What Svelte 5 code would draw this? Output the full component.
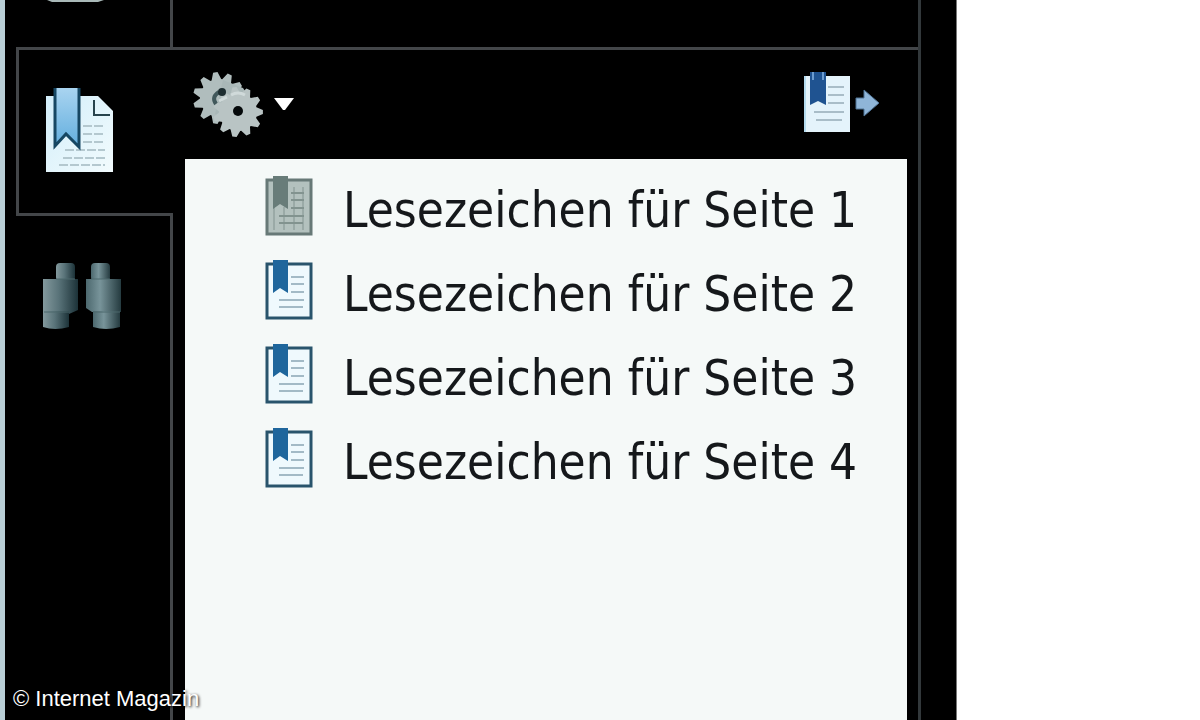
<script lang="ts">
  type Bookmark = { id: number; title: string };

  const bookmarks: Bookmark[] = [1, 2, 3, 4].map((id) => ({
    id,
    title: `Lesezeichen für Seite ${id}`
  }));

  let selected = $state(1);

  function gear(cx: number, cy: number, outer: number, inner: number, teeth: number) {
    const points: string[] = [];
    const step = (Math.PI * 2) / teeth;
    for (let i = 0; i < teeth; i++) {
      const corners = [
        [inner, -0.45],
        [outer, -0.15],
        [outer, 0.15],
        [inner, 0.45]
      ];
      for (const [r, offset] of corners) {
        const a = (i + offset) * step;
        points.push(`${(cx + r * Math.cos(a)).toFixed(1)},${(cy + r * Math.sin(a)).toFixed(1)}`);
      }
    }
    return points.join(' ');
  }
</script>

<div class="page">
  <div class="reader">
    <nav class="sidebar" aria-label="Navigation">
      <div class="slot slot-top">
        <button class="tab" aria-label="Seiten">
          <svg width="60" height="4" viewBox="0 0 60 4">
            <path d="M1 0H58L52 2H6z" fill="#a9b9b8" />
          </svg>
        </button>
      </div>
      <button class="tab tab-active" aria-label="Lesezeichen">
        <svg width="70" height="88" viewBox="0 0 70 88">
          <defs>
            <linearGradient id="ribbon" x1="0" y1="0" x2="0" y2="1">
              <stop offset="0" stop-color="#a9d4f0" />
              <stop offset="1" stop-color="#62aede" />
            </linearGradient>
            <linearGradient id="sheet" x1="0" y1="0" x2="1" y2="1">
              <stop offset="0" stop-color="#d3eefa" />
              <stop offset="1" stop-color="#f2fbfd" />
            </linearGradient>
          </defs>
          <path d="M1 8H53L68 23V84H1z" fill="url(#sheet)" />
          <path d="M49 12V27H65" fill="none" stroke="#27434d" stroke-width="2" />
          <path d="M38 38H60M38 46H60M38 54H60M20 62H60M18 70H60M14 77H60" stroke="#b4c8cf" stroke-width="2" stroke-dasharray="9 2" />
          <path d="M10 0H34V59L21 46L10 58z" fill="url(#ribbon)" />
          <path d="M10 0V58L21 46L34 59V0" fill="none" stroke="#164763" stroke-width="3" />
        </svg>
      </button>
      <div class="slot slot-rest">
        <button class="tab" aria-label="Suchen">
          <svg width="84" height="70" viewBox="0 0 84 70">
            <defs>
              <linearGradient id="barrel" x1="0" y1="0" x2="1" y2="0">
                <stop offset="0" stop-color="#83999d" />
                <stop offset="0.45" stop-color="#597379" />
                <stop offset="1" stop-color="#1c3238" />
              </linearGradient>
              <linearGradient id="barrel-right" x1="0" y1="0" x2="1" y2="0">
                <stop offset="0" stop-color="#4c686e" />
                <stop offset="0.4" stop-color="#78949a" />
                <stop offset="1" stop-color="#253b40" />
              </linearGradient>
            </defs>
            <g fill="url(#barrel)">
              <rect x="14" y="1" width="19" height="18" rx="4" />
              <path d="M1 17H36V48L27 52H1z" />
              <path d="M1 49H27V65Q13 69 1 65z" />
            </g>
            <g fill="url(#barrel-right)">
              <rect x="49" y="1" width="19" height="18" rx="4" />
              <path d="M44 17H79V50H50L44 46z" />
              <path d="M51 49H78V65Q64 69 51 65z" />
            </g>
            <path d="M14 17H33M49 17H68M2 50H27M51 50H78" stroke="#4d686d" stroke-width="1" />
          </svg>
        </button>
      </div>
    </nav>

    <section class="panel">
      <div class="toolbar">
        <button class="tool" aria-label="Optionen">
          <svg width="72" height="66" viewBox="0 0 72 66">
            <polygon points={gear(26, 26, 26, 19, 11)} fill="#b0bdbd" />
            <path d="M30 8L50 16L58 28L34 48L22 42z" fill="#a9b7b7" />
            <polygon points={gear(45, 40, 25, 19, 11)} fill="#b9c4c4" />
            <path d="M23 32Q18 25 26 20" fill="none" stroke="#41585b" stroke-width="4" />
            <path d="M26 29L34 25M38 23Q45 19 52 23" fill="none" stroke="#d0dada" stroke-width="3" />
            <circle cx="29" cy="20" r="4" fill="#1d2d30" />
            <circle cx="45" cy="39" r="5" fill="#05090a" />
          </svg>
          <svg width="22" height="14" viewBox="0 0 22 14">
            <path d="M1 0H21L12 12H10z" fill="#fff" />
          </svg>
        </button>
        <button class="tool" aria-label="Neues Lesezeichen">
          <svg width="78" height="66" viewBox="0 0 78 66">
            <path d="M2 4H48V60H2z" fill="#e4f3fb" />
            <path d="M3 4V60" stroke="#b4dbef" stroke-width="2" />
            <path d="M26 15H42M26 23H42M26 31H42M12 40H42M14 48H40" stroke="#a9bdc8" stroke-width="2" />
            <path d="M8 0H24V33L16 29L8 33z" fill="#1f5391" />
            <path d="M11 0V8M21 0V8" stroke="#6c9cd0" stroke-width="2" />
            <path d="M54 26H62V18L77 31L62 44V37H54z" fill="#8fb5d8" stroke="#4e7294" stroke-width="1" />
          </svg>
        </button>
      </div>

      <ul class="list">
        {#each bookmarks as bookmark (bookmark.id)}
          <li>
            <button
              class="bookmark"
              class:selected={bookmark.id === selected}
              onclick={() => (selected = bookmark.id)}
            >
              <svg width="48" height="62" viewBox="0 0 48 62">
                <rect class="sheet" x="2" y="5" width="44" height="54" stroke-width="3" />
                <path class="lines" d="M26 18H39M26 25H39M26 33H39M14 41H39M14 48H38" stroke-width="2" />
                {#if bookmark.id === selected}
                  <path d="M9 12V55M19 32V55M29 12V55M38 12V55" stroke="#829390" stroke-width="1" />
                {/if}
                <path class="ribbon" d="M8 1H23V34L15 29L8 34z" />
              </svg>
              <span>{bookmark.title}</span>
            </button>
          </li>
        {/each}
      </ul>
    </section>
  </div>
  <small class="credit">© Internet Magazin</small>
</div>

<style>
  :global(body) {
    margin: 0;
    background: #fff;
  }

  .page {
    position: relative;
    box-sizing: border-box;
    min-height: 100vh;
    padding-right: 243px;
    display: flex;
  }

  .reader {
    flex: 1;
    display: grid;
    grid-template-columns: 168px minmax(0, 1fr);
    box-sizing: border-box;
    padding-right: 35px;
    border-left: 5px solid #b9cfd6;
    border-right: 1px solid #777;
    background: #000;
  }

  button {
    margin: 0;
    padding: 0;
    border: 0;
    background: none;
    color: inherit;
    font: inherit;
    cursor: pointer;
  }

  svg {
    display: block;
    flex: none;
  }

  .sidebar {
    display: flex;
    flex-direction: column;
    padding-left: 11px;
  }

  .slot {
    display: flex;
    align-items: flex-start;
    border-right: 3px solid #434649;
  }

  .slot-top {
    height: 47px;
    padding-left: 30px;
  }

  .slot-rest {
    flex: 1;
    padding: 46px 0 0 26px;
  }

  .tab-active {
    height: 169px;
    padding-left: 26px;
    border: 3px solid #434649;
    border-right: 0;
  }

  .panel {
    display: flex;
    flex-direction: column;
    padding-top: 47px;
    border-right: 3px solid #32383b;
  }

  .toolbar {
    box-sizing: border-box;
    display: flex;
    align-items: center;
    justify-content: space-between;
    height: 112px;
    padding: 0 38px 0 20px;
    border-top: 3px solid #434649;
  }

  .tool {
    display: flex;
    align-items: center;
    gap: 8px;
  }

  .list {
    flex: 1;
    margin: 0 11px 0 12px;
    padding: 8px 0 0 80px;
    list-style: none;
    background: #f5f9f8;
  }

  .bookmark {
    display: flex;
    align-items: center;
    gap: 30px;
    height: 84px;
    padding-bottom: 6px;
    color: #15181b;
    font-family: "DejaVu Sans Condensed", "DejaVu Sans", sans-serif;
    font-size: 49px;
    line-height: 64px;
    white-space: nowrap;
  }

  .bookmark span {
    padding-top: 10px;
  }

  .sheet {
    fill: #eff9fd;
    stroke: #29546c;
  }

  .lines {
    stroke: #a3bac6;
  }

  .ribbon {
    fill: #1f669c;
  }

  .selected .sheet {
    fill: #b3c1be;
    stroke: #677977;
  }

  .selected .lines {
    stroke: #82938f;
  }

  .selected .ribbon {
    fill: #687c79;
  }

  .credit {
    position: absolute;
    left: 13px;
    bottom: 8px;
    color: #fff;
    font-family: "Liberation Sans", sans-serif;
    font-size: 22px;
    line-height: 26px;
    text-shadow: 1px 1px 3px #000;
  }
</style>
